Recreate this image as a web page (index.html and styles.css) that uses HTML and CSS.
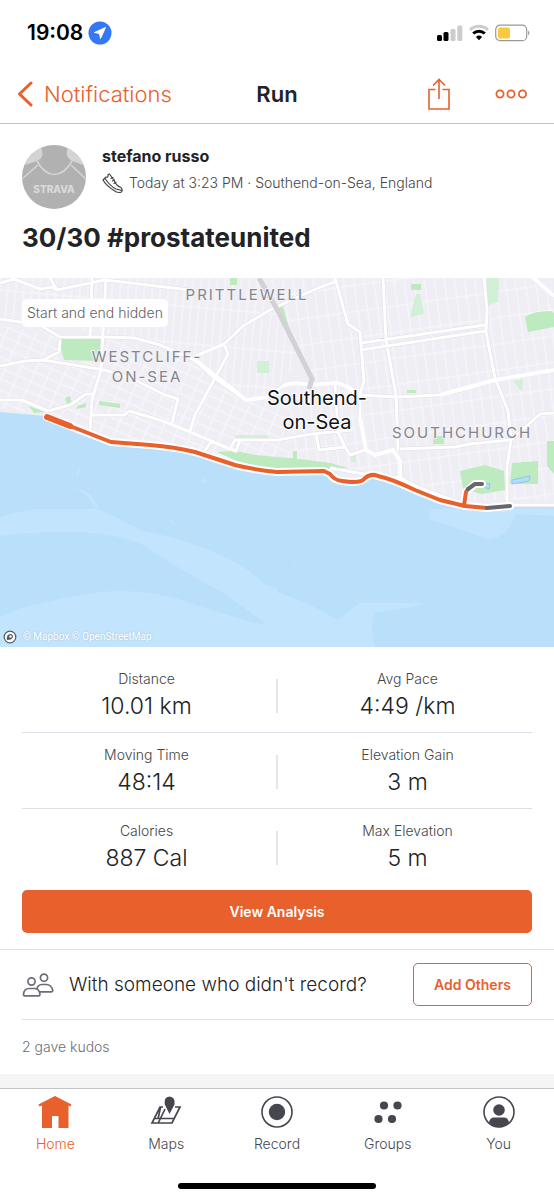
FILE: index.html
```
<!DOCTYPE html>
<html lang="en">
<head>
    <meta charset="UTF-8">
    <meta name="viewport" content="width=device-width, initial-scale=1.0">
    <title>Run</title>
    <link rel="stylesheet" href="styles.css">
</head>
<body>
    <div class="status-bar">
        <div class="status-time">
            <span>19:08</span>
            <svg width="24" height="24" viewBox="0 0 24 24">
                <circle cx="12" cy="12" r="11.5" fill="#3478f6"/>
                <path d="M17.500 6.500L6.500 11.500l5 1 1 5z" fill="#fff" stroke="#fff" stroke-linejoin="round"/>
            </svg>
        </div>
        <div class="status-icons">
            <svg width="26" height="18" viewBox="0 0 26 18">
                <rect x="0" y="11" width="5" height="6" rx="1.5" fill="#000"/>
                <rect x="6.500" y="8" width="5" height="9" rx="1.500" fill="#000"/>
                <rect x="13.500" y="5" width="5" height="12" rx="1.500" fill="#ccc"/>
                <rect x="20.300" y="1.500" width="5" height="15.500" rx="1.500" fill="#ccc"/>
            </svg>
            <svg width="20" height="18" viewBox="0 0 20 18" fill="none">
                <path d="M1 5.800a13 13 0 0 1 18 0" stroke="#ccc" stroke-width="3"/>
                <path d="M4.200 9.500a8.500 8.500 0 0 1 11.600 0" stroke="#000" stroke-width="3"/>
                <path d="M6.900 13a4.500 4.500 0 0 1 6.200 0L10 16.300z" fill="#000"/>
            </svg>
            <svg width="36" height="18" viewBox="0 0 36 18">
                <rect x="0.700" y="1.200" width="31" height="15.500" rx="4.500" fill="#fff" stroke="#999" stroke-width="1.200"/>
                <rect x="3" y="3.500" width="12" height="11" rx="2" fill="#f8ca3e"/>
                <path d="M33.300 6.500q2 2.500 0 5z" fill="#777"/>
            </svg>
        </div>
    </div>

    <header class="nav-bar">
        <a href="#" class="back">
            <svg width="16" height="26" viewBox="0 0 16 26" fill="none" stroke="#e8602c" stroke-width="3" stroke-linecap="round" stroke-linejoin="round"><path d="M14 2L2.500 13 14 24"/></svg>
            Notifications
        </a>
        <h1>Run</h1>
        <div class="nav-actions">
            <button aria-label="Share">
                <svg width="22" height="32" viewBox="0 0 22 32" fill="none" stroke="#e8602c" stroke-width="1.600"><path d="M7.500 11.500H1v19.500h20V11.500h-6.500M11 21V2M5 7.500L11 1.500l6 6"/></svg>
            </button>
            <button aria-label="More">
                <svg width="32" height="10" viewBox="0 0 32 10" fill="none" stroke="#e8602c" stroke-width="1.800"><circle cx="5" cy="5" r="3.600"/><circle cx="16" cy="5" r="3.600"/><circle cx="27.500" cy="5" r="3.600"/></svg>
            </button>
        </div>
    </header>

    <main>
        <section class="activity">
            <div class="athlete">
                <svg class="avatar" viewBox="0 0 64 64">
                    <clipPath id="round"><circle cx="32" cy="32" r="32"/></clipPath>
                    <g clip-path="url(#round)">
                        <path fill="#b1b1b1" d="M0 0h64v64H0z"/>
                        <path fill="#d4d4d4" d="M0 21L15 16Q22 13 20 5L17 0H0zM64 21L50 16Q43 12 45 5L47 0h17z"/>
                        <path d="M15 16Q22 29 32 29.500Q43 29 50 16M0 34L16 20M64 34L49 20" fill="none" stroke="#d4d4d4" stroke-width="1.600"/>
                        <text x="32" y="48" class="jersey">STRAVA</text>
                    </g>
                </svg>
                <div class="athlete-info">
                    <p class="name">stefano russo</p>
                    <p class="when">
                        <svg width="21" height="21" viewBox="0 0 21 21" fill="none" stroke="#444" stroke-width="1.200" stroke-linejoin="round" stroke-linecap="round">
                            <path d="M1 7L4 4Q6.500 5 6 1.500L7.500 1L12.500 8Q14 12.500 19 14.500Q21 17 19.500 19Q15.500 20.500 12 17.500Q4 12.500 1 7zM3 5.500Q8 13 14 16L20 17.500M9 5.500l2-1M10.500 8l2-1M12 10.500l2-1"/>
                        </svg>
                        Today at 3:23 PM · Southend-on-Sea, England
                    </p>
                </div>
            </div>
            <h2>30/30 #prostateunited</h2>
        </section>

        <section class="map">
            <svg class="map-canvas" viewBox="0 278 554 369">
                <defs>
                    <pattern id="streets-a" width="8" height="37" patternUnits="userSpaceOnUse" patternTransform="rotate(5)">
                        <path d="M1 0v37M0 30h8" class="street"/>
                    </pattern>
                    <pattern id="streets-b" width="10" height="26" patternUnits="userSpaceOnUse" patternTransform="rotate(-8)">
                        <path d="M1 0v26M0 20h10" class="street"/>
                    </pattern>
                    <pattern id="streets-c" width="14" height="10" patternUnits="userSpaceOnUse" patternTransform="rotate(24)">
                        <path d="M1 0v10M0 6h14" class="street"/>
                    </pattern>
                </defs>

                <!-- sea -->
                <path fill="#b9dffa" d="M0 278h554v369H0z"/>
                <g fill="#c2e4fc">
                    <path d="M0 517Q25 510 35 509H98L90 500Q86 492 72 489Q86 489 91 495L100 510Q118 517 140 530Q190 540 222 556Q250 568 265 585L277 588V622L265 623L225 594Q175 567 145 546Q110 530 55 532Q20 533 0 536z"/>
                    <path d="M0 617Q20 606 40 604Q90 591 120 591Q155 591 185 601Q235 618 264 625Q268 622 260 617L277 592Q310 603 338 620Q350 610 360 603H428Q400 610 374 613Q370 630 375 647H0z"/>
                    <path d="M429 509L554 508V516L515 514Q510 535 490 540L429 519z"/>
                    <path d="M76 476l3-10 1 1-2 8zM165 515l10 9v3zM201 481l3-4 2 4-2 3zM278 590l16-26v-8l1 8z"/>
                </g>

                <!-- land -->
                <path fill="#efeef4" d="M0 278H554V505L510 506L487 510L465 508L440 502L415 492L394 482L371 477L360 484L334 483L324 473L277 474L235 467L195 454L150 447L111 444L70 428L45 416L0 412z"/>
                <path fill="url(#streets-a)" d="M0 278H262L300 360L268 397L246 400L195 360L135 338L0 319z"/>
                <path fill="url(#streets-c)" d="M0 325L60 337H105L195 360L246 400L290 390V467L235 462L150 443L100 432L45 414L0 409z"/>
                <path fill="url(#streets-b)" d="M270 278H530L554 300V500L460 500L394 476L360 470L290 466V390L310 380z"/>

                <!-- parks -->
                <g fill="#bdeabf">
                    <path d="M61 339L101 338V361L64 360Q60 350 61 339zM99 401L120 404V408L99 405zM65 398l5-2 2 7-5 1zM77 406l9-3v4l-9 2zM29 406L45 412L34 413zM230 277h7v8h-7z"/>
                    <path d="M217 452L236 451L255 455L300 459L330 463L348 468L300 470L250 467z"/>
                    <path d="M460 471L485 465L504 471L505 490L482 494L463 489zM512 463L538 461V484L510 484zM525 317Q533 311 551 311L554 313V327L528 332zM547 441h7v33l-7-8z"/>
                    <path d="M411 284h10v6h-10zM433 436h11v8h-11zM407 390h9v3h-9zM293 451h4v8h-4zM277 305l6 2 8 26-2 2z"/>
                </g>
                <g fill="#d1f0d5">
                    <path d="M416 294h4l4 20-14 3zM487 278h12l-1 24-12 4zM257 361h12v12h-12zM513 381l10-2-1 13zM235 435h33v4h-33zM351 453h5v9h-5z"/>
                </g>
                <g fill="#b5dcfa" stroke="#8fc4f5">
                    <path d="M512 480L530 476L529 481L512 484zM485 483l5 1-1 5-5-2z"/>
                </g>

                <!-- roads -->
                <g class="road-edge">
                    <path id="roads" d="M0 283L14 279L40 289L52 287L57 290L90 283L105 280L190 290M50 278L57 290M92 278L90 338M106 278L102 350L101 370L92 400L90 430M0 319L40 325L60 337H105L135 338L160 345L195 360L213 377L246 400L268 397L283 386Q293 381 310 385L335 383Q348 384 357 395L397 397L440 395L470 388L495 380L554 370M60 340L59 352L43 360L25 361L0 366M43 360L105 370L135 380L165 395L178 399L172 423M0 400L22 400L48 411L70 405L86 394L93 394M92 415L125 415L129 411L160 420L190 432L230 449L235 440L277 440L312 434L352 430M190 431L195 415L215 378L228 354L224 344L205 352L195 356M224 344L243 326L270 310L300 296L318 288L337 281M335 278L348 324L360 332L364 381L360 394M360 394V418L366 450L375 455L393 450L400 461L401 477M383 278L386 340L396 395L398 450M361 343L485 325M361 350L485 331M484 278L487 310L486 332L495 378L508 411L511 440L507 468V503M400 449L455 447L470 444L511 440L540 414L554 413M530 275L554 296M330 468L375 476L401 478L420 488L465 505L554 505M316 433L319 450L345 447L350 455L365 450M335 384L338 432L345 447M204 452L211 442M231 449L236 451L240 440"/>
                </g>
                <g class="road">
                    <use href="#roads"/>
                    <path class="wide" d="M195 360L246 400L268 397M283 386Q293 381 310 385L335 383Q348 384 357 395M440 395L495 380L554 370M360 418L366 450L375 455L393 450L400 461V477M530 275L554 296"/>
                </g>
                <path d="M259 278L278 311L312 379L309 389" class="railway"/>

                <!-- route -->
                <g class="route-outline">
                    <path d="M47 417L70 426L111 442L150 445Q175 447 195 452L235 465Q255 470 277 472L324 471L330 474Q334 480 342 481Q362 484 365 478Q371 473 378 476Q392 479 415 490L440 500L465 506L487 508L510 506M464 506L466 492L475 484H482"/>
                </g>
                <g class="route">
                    <path class="overlap" d="M47 417L70 426"/>
                    <path d="M47 417L70 426L111 442L150 445Q175 447 195 452L235 465Q255 470 277 472L324 471L330 474Q334 480 342 481Q362 484 365 478Q371 473 378 476Q392 479 415 490L440 500L465 506L487 508M464 506L466 492L468 489"/>
                    <path class="hidden-part" d="M487 508L510 506M468 489L475 484H482"/>
                </g>

                <g class="district">
                    <text x="247" y="300">PRITTLEWELL</text>
                    <text x="147" y="362">WESTCLIFF-</text>
                    <text x="147" y="382">ON-SEA</text>
                    <text x="462" y="438">SOUTHCHURCH</text>
                </g>
                <g class="town">
                    <text x="317" y="405">Southend-</text>
                    <text x="317" y="429">on-Sea</text>
                </g>
            </svg>
            <span class="map-note">Start and end hidden</span>
            <div class="map-credit">
                <svg width="14" height="14" viewBox="0 0 14 14"><circle cx="7" cy="7" r="5.800" fill="#fff" stroke="#555b62" stroke-width="1.200"/><path d="M4 10Q3 4 7.500 4Q10 4 10 6.500Q9.500 10 4 10z" fill="#555b62"/><circle cx="7.500" cy="6.500" r="1.200" fill="#fff"/></svg>
                <span>© Mapbox © OpenStreetMap</span>
            </div>
        </section>

        <section class="stats">
            <dl class="stat-row">
                <div class="stat"><dt>Distance</dt><dd>10.01 km</dd></div>
                <div class="stat"><dt>Avg Pace</dt><dd>4:49 /km</dd></div>
            </dl>
            <dl class="stat-row">
                <div class="stat"><dt>Moving Time</dt><dd>48:14</dd></div>
                <div class="stat"><dt>Elevation Gain</dt><dd>3 m</dd></div>
            </dl>
            <dl class="stat-row">
                <div class="stat"><dt>Calories</dt><dd>887 Cal</dd></div>
                <div class="stat"><dt>Max Elevation</dt><dd>5 m</dd></div>
            </dl>
            <button class="analysis">View Analysis</button>
        </section>

        <section class="social">
            <div class="others">
                <svg width="32" height="24" viewBox="0 0 32 24" fill="none" stroke="#6d6d78" stroke-width="1.700" stroke-linejoin="round">
                    <circle cx="9.500" cy="8.500" r="3.600"/>
                    <circle cx="22" cy="4.700" r="3.600"/>
                    <path d="M1.500 21.500Q2 15.500 7 15.500H13Q16 15.700 17.500 19Q18.500 22.800 17 22.800H2.500Q1.500 22.800 1.500 21.500zM15 16Q15.500 11.700 20 11.500H25Q29.500 12 30.800 17.500Q30.800 18.800 29.500 18.800H17.500"/>
                </svg>
                <p>With someone who didn't record?</p>
                <button class="add">Add Others</button>
            </div>
            <p class="kudos">2 gave kudos</p>
        </section>
    </main>

    <nav class="tab-bar">
        <div class="tabs">
            <a href="#" class="active">
                <svg width="34" height="34" viewBox="0 0 34 34"><path d="M17 1L33.500 9.500L32.500 11.500L30.500 10.500V33H20.500V21H14V33H4V10.500L1.500 11.500L0.500 9.500z" fill="#e8602c"/></svg>
                Home
            </a>
            <a href="#">
                <svg width="34" height="34" viewBox="0 0 34 34" fill="none" stroke="#46464f" stroke-width="1.700">
                    <path d="M14 12H11L3 28H23L31 12H26M16 14L9.500 27.500M6 23.500H25M11.500 12.500L9 24"/>
                    <path d="M20.500 19L15.800 9.500Q14.500 2 20.500 1.500Q26.500 2 25.500 9.500z" fill="#46464f" stroke="none"/>
                </svg>
                Maps
            </a>
            <a href="#">
                <svg width="34" height="34" viewBox="0 0 34 34"><circle cx="17" cy="17" r="15" fill="none" stroke="#46464f" stroke-width="1.600"/><circle cx="17" cy="17" r="8.200" fill="#46464f"/></svg>
                Record
            </a>
            <a href="#">
                <svg width="34" height="34" viewBox="0 0 34 34" fill="#46464f"><circle cx="13" cy="10.500" r="4.100"/><circle cx="26.500" cy="10.500" r="4.100"/><circle cx="7.500" cy="24" r="4.100"/><circle cx="21" cy="24" r="4.100"/></svg>
                Groups
            </a>
            <a href="#">
                <svg width="34" height="34" viewBox="0 0 34 34" fill="#46464f"><circle cx="17" cy="17" r="15" fill="none" stroke="#46464f" stroke-width="1.600"/><circle cx="17" cy="15" r="5.800"/><path d="M7 27.500Q8 22.500 12 22.500H22Q26 22.500 27 27.500Q17 37 7 27.500z"/></svg>
                You
            </a>
        </div>
        <div class="home-indicator"></div>
    </nav>
</body>
</html>
```
FILE: styles.css
```
* {
    box-sizing: border-box;
}

body {
    font-family: Inter, 'Liberation Sans', sans-serif;
    font-weight: 400;
    background-color: #fff;
    color: #222326;
    margin: 0;
    min-height: 100vh;
    display: flex;
    flex-direction: column;
}

h1, h2, p, dl, dd {
    margin: 0;
}

svg {
    display: block;
    flex-shrink: 0;
}

a {
    color: inherit;
    text-decoration: none;
}

button {
    font-family: inherit;
    background: none;
    border: none;
    padding: 0;
    cursor: pointer;
}

.status-bar {
    display: flex;
    justify-content: space-between;
    align-items: center;
    height: 65px;
    padding: 0 23px 0 27px;
}

.status-time {
    display: flex;
    align-items: center;
    gap: 5px;
    color: #000;
    font-size: 21px;
    font-weight: 600;
}

.status-icons {
    display: flex;
    align-items: center;
    gap: 6px;
}

.nav-bar {
    display: grid;
    grid-template-columns: 1fr auto 1fr;
    align-items: center;
    height: 59px;
    padding: 0 27px;
    border-bottom: 1px solid #c4c4c8;
}

.back {
    display: flex;
    align-items: center;
    gap: 11px;
    margin-left: -10px;
    color: #e8602c;
    font-size: 22px;
    font-weight: 300;
}

.nav-bar h1 {
    font-size: 22px;
    font-weight: 600;
}

.nav-actions {
    display: flex;
    justify-content: flex-end;
    align-items: center;
    gap: 45px;
}

main {
    flex: 1;
    background-color: #f5f5f5;
}

.activity {
    background-color: #fff;
    padding: 21px 22px 24px;
}

.athlete {
    display: flex;
    gap: 16px;
}

.avatar {
    width: 64px;
    height: 64px;
}

.jersey {
    font-size: 10px;
    font-weight: 800;
    fill: #dadada;
    text-anchor: middle;
}

.name {
    font-size: 16px;
    font-weight: 700;
    line-height: 22px;
}

.when {
    display: flex;
    align-items: center;
    gap: 6px;
    margin-top: 5px;
    font-size: 14px;
    font-weight: 300;
    line-height: 22px;
    color: #444;
}

h2 {
    margin-top: 13px;
    font-size: 26px;
    font-weight: 700;
    line-height: 32px;
}

.map {
    position: relative;
}

.map-canvas {
    width: 100%;
    height: auto;
}

.street {
    fill: none;
    stroke: #f8f8fb;
    stroke-width: 1;
}

.railway {
    fill: none;
    stroke: #d2d2d5;
    stroke-width: 5;
}

.road-edge {
    fill: none;
    stroke: #dfdfe6;
    stroke-width: 4;
    stroke-linejoin: round;
}

.road {
    fill: none;
    stroke: #fff;
    stroke-width: 3;
    stroke-linejoin: round;
}

.wide {
    stroke-width: 4;
}

.route-outline {
    fill: none;
    stroke: #fff;
    stroke-width: 8;
    stroke-linecap: round;
    stroke-linejoin: round;
}

.route {
    fill: none;
    stroke: #e8602c;
    stroke-width: 4;
    stroke-linecap: round;
    stroke-linejoin: round;
}

.overlap {
    stroke-width: 6;
}

.hidden-part {
    stroke: #66666c;
}

.district {
    font-size: 15px;
    letter-spacing: 2px;
    fill: #85858c;
    stroke: #f4f4f8;
    stroke-width: 2;
    paint-order: stroke;
    text-anchor: middle;
}

.town {
    font-size: 20px;
    fill: #111;
    stroke: #fff;
    stroke-width: 2;
    paint-order: stroke;
    text-anchor: middle;
}

.map-note {
    position: absolute;
    top: 21px;
    left: 22px;
    padding: 0 5px;
    border-radius: 5px;
    background-color: #fff;
    color: #62626a;
    font-size: 14px;
    font-weight: 300;
    line-height: 28px;
}

.map-credit {
    position: absolute;
    bottom: 3px;
    left: 3px;
    display: flex;
    align-items: center;
    gap: 6px;
    color: #fff;
    font-family: Roboto, sans-serif;
    font-size: 10px;
    line-height: 14px;
    text-shadow: 0 0 2px #9bb8cd;
}

.stats {
    background-color: #fff;
    padding: 10px 22px 16px;
    border-bottom: 1px solid #dfdfe8;
}

.stat-row {
    display: grid;
    grid-template-columns: 1fr 1fr;
    align-items: center;
    height: 76px;
    padding-top: 2px;
    border-bottom: 1px solid #dfdfe8;
}

.stat-row:nth-of-type(3) {
    border-bottom: none;
}

.stat {
    text-align: center;
    padding: 0 6px 0 0;
}

.stat + .stat {
    padding: 0 0 0 6px;
    position: relative;
}

.stat + .stat::before {
    content: "";
    position: absolute;
    left: -1px;
    top: 50%;
    height: 34px;
    margin-top: -17px;
    border-left: 2px solid #e6e6ec;
}

dt {
    font-size: 14px;
    font-weight: 300;
    line-height: 20px;
    color: #444;
}

dd {
    font-size: 23px;
    font-weight: 300;
    line-height: 34px;
}

.analysis {
    display: block;
    width: 100%;
    height: 43px;
    margin-top: 5px;
    border-radius: 5px;
    background-color: #e8602c;
    color: #fff;
    font-size: 14px;
    font-weight: 600;
}

.social {
    background-color: #fff;
    padding-left: 22px;
}

.others {
    display: flex;
    align-items: center;
    gap: 15px;
    height: 70px;
    padding-right: 22px;
    border-bottom: 1px solid #dfdfe8;
}

.others p {
    flex: 1;
    font-size: 19px;
    font-weight: 300;
    line-height: 26px;
}

.add {
    width: 119px;
    height: 43px;
    border: 1px solid #e8602c;
    border-radius: 5px;
    color: #e8602c;
    font-size: 14px;
    font-weight: 600;
}

.kudos {
    padding: 17px 0;
    color: #6d6d78;
    font-size: 14px;
    font-weight: 300;
    line-height: 20px;
}

.tab-bar {
    background-color: #fff;
    border-top: 1px solid #c4c4c8;
    padding: 6px 0 11px;
}

.tabs {
    display: grid;
    grid-template-columns: repeat(5, 1fr);
}

.tabs a {
    display: flex;
    flex-direction: column;
    align-items: center;
    gap: 5px;
    color: #46464f;
    font-size: 14px;
    font-weight: 300;
    line-height: 20px;
}

.tabs .active {
    color: #e8602c;
}

.home-indicator {
    width: 198px;
    height: 6px;
    margin: 29px auto 0;
    border-radius: 3px;
    background-color: #000;
}
```
